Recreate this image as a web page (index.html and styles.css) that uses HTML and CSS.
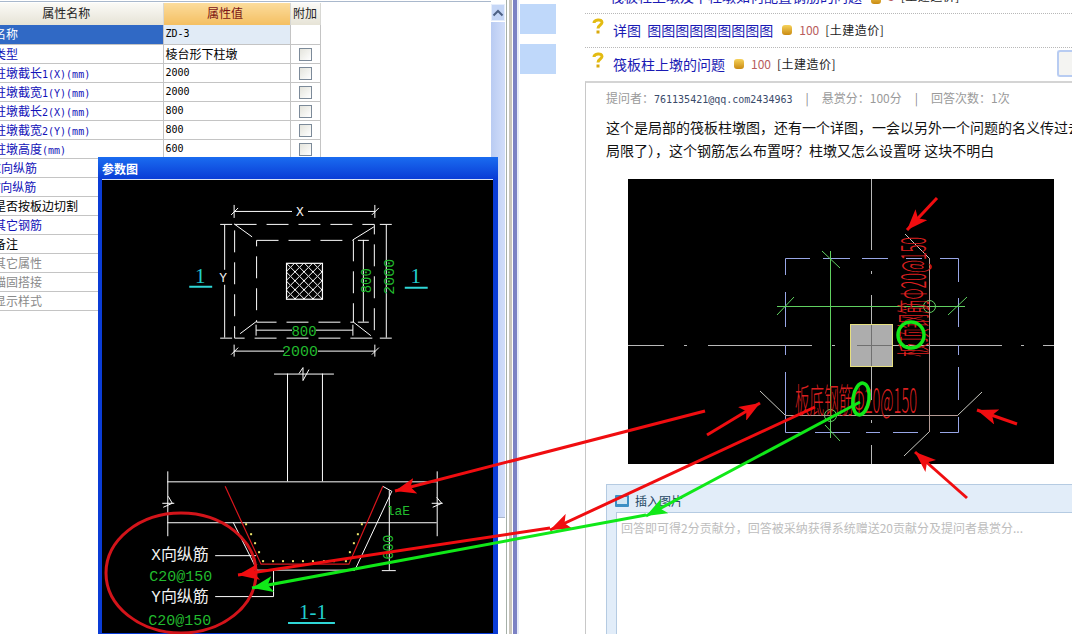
FILE: index.html
```html
<!DOCTYPE html>
<html lang="zh">
<head>
<meta charset="utf-8">
<title>筏板柱上墩的问题</title>
<link rel="stylesheet" href="styles.css">
</head>
<body>
<div class="screen">
  <section class="props">
    <div class="props-table-wrap">
      <table class="props-table">
        <colgroup><col class="c-name"><col class="c-val"><col class="c-add"></colgroup>
        <thead><tr><th class="th-name">属性名称</th><th class="th-val">属性值</th><th>附加</th></tr></thead>
        <tbody>
          <tr class="sel"><td class="name">名称</td><td class="val mono">ZD-3</td><td></td></tr>
          <tr><td class="name link">类型</td><td class="val">棱台形下柱墩</td><td><i class="chk"></i></td></tr>
          <tr><td class="name link">柱墩截长<span class="mono">1(X)(mm)</span></td><td class="val mono">2000</td><td><i class="chk"></i></td></tr>
          <tr><td class="name link">柱墩截宽<span class="mono">1(Y)(mm)</span></td><td class="val mono">2000</td><td><i class="chk"></i></td></tr>
          <tr><td class="name link">柱墩截长<span class="mono">2(X)(mm)</span></td><td class="val mono">800</td><td><i class="chk"></i></td></tr>
          <tr><td class="name link">柱墩截宽<span class="mono">2(Y)(mm)</span></td><td class="val mono">800</td><td><i class="chk"></i></td></tr>
          <tr><td class="name link">柱墩高度<span class="mono">(mm)</span></td><td class="val mono">600</td><td><i class="chk"></i></td></tr>
          <tr><td class="name link">X向纵筋</td><td></td><td></td></tr>
          <tr><td class="name link">Y向纵筋</td><td></td><td></td></tr>
          <tr><td class="name">是否按板边切割</td><td></td><td></td></tr>
          <tr><td class="name link">其它钢筋</td><td></td><td></td></tr>
          <tr><td class="name">备注</td><td></td><td></td></tr>
          <tr><td class="name dim">其它属性</td><td></td><td></td></tr>
          <tr><td class="name dim">锚固搭接</td><td></td><td></td></tr>
          <tr><td class="name dim">显示样式</td><td></td><td></td></tr>
        </tbody>
      </table>
    </div>
    <div class="vscroll">
      <div class="vscroll-btn"><svg width="12" height="8" viewBox="0 0 12 8"><path d="M1.500 6.500 6 2l4.500 4.500" fill="none" stroke="#4d6185" stroke-width="2"/></svg></div>
      <div class="vscroll-thumb"></div>
    </div>
  </section>
  <div class="splitter"></div>
  <main class="page">
    <nav class="side"><div class="side-block"></div><div class="side-block"></div></nav>
    <div class="content">
      <div class="q-row q-cut"><a class="q-title">筏板柱上墩及下柱墩如何配置钢筋的问题</a><span class="coin"></span><span class="q-pts">5</span><span class="q-tag">[土建造价]</span></div>
      <div class="q-row dotted">
        <svg class="q-mark" width="12" height="16" viewBox="0 0 12 16"><path d="M2 5C2 1.500 10 .5 10 4.500 10 7 6 7 6 10.500" fill="none" stroke="#e3bb12" stroke-width="3"/><rect x="4.500" y="12.500" width="3" height="3" fill="#d9a90c"/></svg>
        <a class="q-title">详图&nbsp;&nbsp;图图图图图图图图图</a><span class="coin"></span><span class="q-pts">100</span><span class="q-tag">[土建造价]</span>
      </div>
      <div class="q-row dotted">
        <svg class="q-mark" width="12" height="16" viewBox="0 0 12 16"><path d="M2 5C2 1.500 10 .5 10 4.500 10 7 6 7 6 10.500" fill="none" stroke="#e3bb12" stroke-width="3"/><rect x="4.500" y="12.500" width="3" height="3" fill="#d9a90c"/></svg>
        <a class="q-title">筏板柱上墩的问题</a><span class="coin"></span><span class="q-pts">100</span><span class="q-tag">[土建造价]</span>
        <span class="q-btn"></span>
      </div>
      <article class="q-box">
        <p class="q-meta">提问者：<span class="mono-user">761135421@qq.com2434963</span><span class="sep">|</span>悬赏分：100分<span class="sep">|</span>回答次数：1次</p>
        <p class="q-body">这个是局部的筏板柱墩图，还有一个详图，一会以另外一个问题的名义传过去（图片大小被<br>局限了），这个钢筋怎么布置呀？柱墩又怎么设置呀 这块不明白</p>
        <svg class="plan" width="426" height="285" viewBox="628 179 426 285">
          <rect x="628" y="179" width="426" height="285" fill="#000"/>
          <g stroke="#b9b9b9" stroke-width="1" fill="none">
            <path d="M871.500 179V250M871.500 271V274M871.500 295V324M871.500 367V400M871.500 420V423M871.500 445V464"/>
            <path d="M628 345.500H664M684 345.500H687M708 345.500H812M832 345.500H835M856 345.500H1002M1021 345.500H1024M1043 345.500H1054"/>
          </g>
          <path d="M785.500 275V258.500H810M823 258.500H850M862 258.500H888M906 258.500H922M940 258.500H958.500V282M958.500 298V327M958.500 345V355M958.500 367V400M958.500 417V432.500H940M918 432.500H893M880 432.500H866M850 432.500H815M805 432.500H785.500V372M785.500 355V345M785.500 327V292" fill="none" stroke="#98a6e6"/>
          <g stroke="#60d060" fill="none">
            <path d="M830.500 251V438M777 306.500H965"/>
            <path d="M822 251 840 268M777 315 794 297M948 315 967 297M825 425 840 441"/>
            <circle cx="929.500" cy="306.500" r="6"/>
            <circle cx="830.500" cy="415.500" r="6"/>
          </g>
          <g stroke="#b39a94" fill="none">
            <path d="M785 415.500H958M929.500 258V432"/>
            <path d="M905 234 929 258M760 391 785 415M958 415 982 392M929 432 904 456" stroke="#c8c8c0"/>
          </g>
          <rect x="850.500" y="324.500" width="42" height="42" fill="#adadad" stroke="#e6df80"/>
          <path d="M871.500 325V366M857 345.500H892" stroke="#707070"/>
          <text class="cad-red" x="795" y="413" font-size="34" textLength="122" lengthAdjust="spacingAndGlyphs">板底钢筋Φ20@150</text>
          <text class="cad-red" transform="translate(926 357) rotate(-90)" font-size="34" textLength="120" lengthAdjust="spacingAndGlyphs">板顶钢筋Φ20@150</text>
        </svg>
        <section class="reply">
          <div class="reply-bar">
            <svg width="14" height="12" viewBox="0 0 14 12"><rect width="14" height="12" rx="1" fill="#3c8fc4"/><rect x="2" y="2" width="10" height="7" fill="#cfe6f4"/></svg>
            <span>插入图片</span>
          </div>
          <div class="reply-input">回答即可得2分贡献分，回答被采纳获得系统赠送20贡献分及提问者悬赏分...</div>
        </section>
      </article>
    </div>
  </main>

  <section class="win">
    <header class="win-title">参数图</header>
    <svg class="win-canvas" width="391" height="454" viewBox="102 180 391 454">
      <defs>
        <pattern id="hatch" width="9" height="9" patternUnits="userSpaceOnUse" patternTransform="translate(286 263)">
          <path d="M0 0 9 9M9 0 0 9" stroke="#fff" stroke-width="1"/>
        </pattern>
      </defs>
      <g fill="none" stroke="#fff" stroke-width="1">
        <path d="M234 211.500H292M308 211.500H375M234 205V218M375 205V218M231 215 238 208M372 215 379 208"/>
        <rect x="234.500" y="224.500" width="140" height="114" stroke-dasharray="22 10"/>
        <rect x="256.500" y="240.500" width="97" height="82" stroke-dasharray="22 10"/>
        <rect x="286.500" y="263.500" width="36" height="36" fill="url(#hatch)" stroke-width="1.200"/>
        <path d="M234 224 252 237M374 227 353 240M240 334 256 322M353 322 371 336"/>
        <path d="M224.500 225V270M224.500 285V338M220 224.500H232M220 338.500H232"/>
        <path d="M386.500 225V338M380 224.500H392M380 338.500H392"/>
        <path d="M363.500 240V322M358 240.500H369M358 322.500H369"/>
        <path d="M256 330.500H292M316 330.500H353M256 325V336M353 325V336"/>
        <path d="M234 351.500H284M318 351.500H375M234 345V357M375 345V357M231 355 238 348M372 355 379 348"/>
        <path d="M274 374.500H334M287.500 374V482M322.500 374V482"/>
        <path d="M299 374 303 368 303 381 309 370"/>
        <path d="M167 482.500H437M167 523.500H437M167.500 472V537M437.500 472V537"/>
        <path d="M162 504H174M168 497 172 504 163 508M432 504H443M433 508 442 504 437 498"/>
        <path d="M233 523 257 571H355L392 492 383 487"/>
        <path d="M389.500 491V571M382 571.500H396"/>
        <path d="M215 556.500H256M215 597.500H273.500V571"/>
      </g>
      <path d="M225 487 261 565H349L383 487" fill="none" stroke="#d8161c" stroke-width="1.200"/>
      <g fill="#f2ea70">
        <rect x="245" y="524" width="2" height="2"/><rect x="250" y="534" width="2" height="2"/><rect x="254" y="543" width="2" height="2"/><rect x="258" y="552" width="2" height="2"/><rect x="262" y="561" width="2" height="2"/>
        <rect x="272" y="561" width="2" height="2"/><rect x="282" y="561" width="2" height="2"/><rect x="292" y="561" width="2" height="2"/><rect x="302" y="561" width="2" height="2"/><rect x="312" y="561" width="2" height="2"/><rect x="323" y="561" width="2" height="2"/><rect x="333" y="561" width="2" height="2"/><rect x="345" y="561" width="2" height="2"/>
        <rect x="349" y="552" width="2" height="2"/><rect x="353" y="543" width="2" height="2"/><rect x="357" y="534" width="2" height="2"/><rect x="361" y="524" width="2" height="2"/>
      </g>
      <g class="cad-green">
        <text x="300" y="356.500" text-anchor="middle" font-size="15">2000</text>
        <text x="304" y="336" text-anchor="middle" font-size="14">800</text>
        <text transform="translate(394 277) rotate(-90)" text-anchor="middle" font-size="15">2000</text>
        <text transform="translate(371 281) rotate(-90)" text-anchor="middle" font-size="14">800</text>
        <text transform="translate(393 548) rotate(-90)" text-anchor="middle" font-size="14">600</text>
        <text x="387" y="516" font-size="13">laE</text>
        <text x="149" y="582" font-size="15">C20@150</text>
        <text x="148" y="626" font-size="15">C20@150</text>
      </g>
      <g class="cad-white">
        <text x="300" y="216" text-anchor="middle" font-size="13">X</text>
        <text x="223" y="282" text-anchor="middle" font-size="13">Y</text>
        <text x="151" y="561" font-size="16">X向纵筋</text>
        <text x="151" y="603" font-size="16">Y向纵筋</text>
      </g>
      <g class="cad-cyan">
        <text x="200" y="283" text-anchor="middle" font-size="21">1</text>
        <text x="416" y="283" text-anchor="middle" font-size="21">1</text>
        <text x="313" y="620" text-anchor="middle" font-size="21">1-1</text>
      </g>
      <path d="M189 287H212M405 288H428M288 624H335" stroke="#2fd6d6" stroke-width="2" fill="none"/>
    </svg>
  </section>

  <svg class="marks" width="1072" height="634" viewBox="0 0 1072 634">
    <defs>
      <marker id="hr" markerUnits="userSpaceOnUse" markerWidth="22" markerHeight="16" refX="21" refY="8" orient="auto"><path d="M0 0 21 8 0 16 5 8z" fill="#f00d10"/></marker>
      <marker id="hg" markerUnits="userSpaceOnUse" markerWidth="22" markerHeight="16" refX="21" refY="8" orient="auto"><path d="M0 0 21 8 0 16 5 8z" fill="#10e818"/></marker>
    </defs>
    <ellipse cx="181" cy="573" rx="75" ry="60" fill="none" stroke="#d3141a" stroke-width="3"/>
    <g fill="none" stroke-width="3">
      <g stroke="#f00d10">
        <path d="M705 411 395 491" marker-end="url(#hr)"/>
        <path d="M707 435 760 403" marker-end="url(#hr)"/>
        <path d="M815 407 550 530" marker-end="url(#hr)"/>
        <path d="M550 528 238 575" marker-end="url(#hr)"/>
        <path d="M937 198 907 230" marker-end="url(#hr)"/>
        <path d="M1017 424 977 410" marker-end="url(#hr)"/>
        <path d="M967 498 915 452" marker-end="url(#hr)"/>
      </g>
      <g stroke="#10e818">
        <path d="M860 402 646 516" marker-end="url(#hg)"/>
        <path d="M646 515 252 588" marker-end="url(#hg)"/>
        <ellipse cx="861" cy="399" rx="8" ry="16" stroke-width="3.500" transform="rotate(8 861 399)"/>
        <circle cx="911" cy="335" r="13" stroke-width="3.500"/>
      </g>
    </g>
  </svg>
</div>
</body>
</html>
```
FILE: styles.css
```css
* { box-sizing: border-box; }
html, body { margin: 0; padding: 0; }
body { background: #fff; font-family: "Noto Sans CJK SC", "Liberation Sans", sans-serif; font-size: 12px; color: #000; }
.screen { position: relative; display: flex; width: 1072px; height: 634px; overflow: hidden; }

/* property pane */
.props { display: flex; flex: 0 0 505px; padding-top: 1px; }
.props-table-wrap { flex: 0 0 491px; overflow: hidden; border-top: 1px solid #a9b8cc; padding-top: 1px; }
.props-table { border-collapse: collapse; table-layout: fixed; width: 326px; margin-left: -6px; font-size: 12px; }
.c-name { width: 169px; }
.c-val { width: 127px; }
.c-add { width: 30px; }
.props-table th { height: 22px; padding: 0; font-weight: 400; color: #222; background: linear-gradient(#fbfaf6, #e6e3d6); border-right: 1px solid #d8d8d4; line-height: 19px; vertical-align: top; }
.props-table th.th-name { padding-right: 24px; }
.props-table th.th-val { background: linear-gradient(#fbdc9c, #f4bf62); color: #7b1414; padding-right: 3px; }
.props-table td { height: 19px; padding: 0 0 0 2px; border-bottom: 1px solid #c4c4c4; border-right: 1px solid #c4c4c4; line-height: 18px; white-space: nowrap; overflow: hidden; }
.props-table td.name { padding-left: 0; }
.props-table td:last-child { text-align: center; padding: 0; }
.sel .name { background: #3069c5; color: #fff; }
.sel .val { background: #e1ebf6; }
.link { color: #1212b8; }
.dim { color: #8a8a8a; }
.mono { font-family: "DejaVu Sans Mono", monospace; font-size: 10px; line-height: 10px; }
.chk { display: inline-block; width: 13px; height: 13px; margin-top: 3px; border: 1px solid #7c8a99; background: linear-gradient(135deg, #e4e4dc, #fff); vertical-align: top; }

.vscroll { flex: 0 0 14px; display: flex; flex-direction: column; padding-top: 3px; }
.vscroll-btn { height: 17px; display: flex; align-items: center; justify-content: center; background: #c5d6f6; border: 1px solid #e6eefc; }
.vscroll-thumb { height: 496px; margin-top: 1px; background: linear-gradient(90deg, #b9cbf2, #d2defa); border-bottom: 1px solid #a9b6cc; }

.splitter { flex: 0 0 14px; background: linear-gradient(90deg, #fff 0 1px, #a6b0a8 1px 2px, #fff 2px 4px, #c9c6bc 4px 7px, #fff 7px 8px, #7c82c4 8px 12px, #e7ecf9 12px 14px); }

/* page */
.page { flex: 1; display: flex; min-width: 0; }
.side { flex: 0 0 66px; padding: 4px 0 0 1px; display: flex; flex-direction: column; gap: 10px; }
.side-block { width: 36px; height: 30px; background: #bfd8fa; }
.content { flex: 1; min-width: 0; display: flex; flex-direction: column; height: 634px; }
.q-row { display: flex; align-items: center; flex: none; height: 34px; padding: 0 0 2px 7px; white-space: nowrap; font-size: 12px; line-height: 20px; }
.q-cut { height: 13px; overflow: hidden; align-items: flex-start; padding: 0 0 0 25px; }
.q-cut > * { margin-top: -14px; }
.q-cut .coin { margin-top: -6px; }
.dotted { border-top: 1px dotted #b8b8b8; }
.q-mark { flex: none; margin: -7px 9px 0 0; }
.q-title { font-size: 14px; color: #1a1ab4; }
.coin { flex: none; width: 10px; height: 10px; margin: 0 7px 0 9px; border-radius: 3px; background: linear-gradient(#f6d25a, #c98a12); }
.q-pts { color: #b85c5c; font-size: 12px; margin-right: 6px; }
.q-tag { color: #222; font-size: 12px; letter-spacing: .5px; }
.q-btn { flex: none; margin-left: auto; width: 15px; height: 27px; border: 2px solid #b8ccf2; border-right: 0; border-radius: 3px 0 0 3px; background: #f4f4f2; }

.q-box { flex: 1; border-top: 2px solid #d4d4d4; border-left: 1px solid #c8c8c8; padding: 6px 0 0 20px; display: flex; flex-direction: column; min-height: 0; }
.q-meta { margin: 0; height: 18px; line-height: 18px; color: #9a9a9a; white-space: nowrap; font-size: 12px; }
.mono-user { font-family: "DejaVu Sans Mono", monospace; font-size: 10px; color: #3a4a6a; }
.sep { margin: 0 13px; color: #888; }
.q-body { margin: 9px 0 0; font-size: 14px; line-height: 23px; white-space: nowrap; color: #111; height: 46px; flex: none; }
.plan { display: block; flex: none; margin: 17px 0 0 22px; }
.cad-red { fill: #d81f1f; font-family: "Noto Sans CJK SC", sans-serif; font-weight: 300; }

.reply { flex: 1; margin-top: 20px; background: #e2edf9; border: 1px solid #b5cbe2; border-right: 0; border-bottom: 0; padding-left: 9px; display: flex; flex-direction: column; min-height: 0; }
.reply-bar { height: 27px; flex: none; display: flex; align-items: center; gap: 6px; color: #274a66; font-size: 12px; padding: 4px 0 0 0; margin-left: -1px; }
.reply-input { flex: 1; background: #fff; border: 1px solid #b5cbe2; border-right: 0; border-bottom: 0; padding: 6px 0 0 4px; line-height: 18px; color: #bdbdbd; font-size: 12px; white-space: nowrap; }

/* floating window */
.win { position: absolute; left: 98px; top: 157px; width: 400px; height: 480px; background: linear-gradient(#1a6cf0, #0a3cd6 22px); padding: 0 4px; }
.win-title { height: 22px; line-height: 24px; color: #fff; font-weight: 700; font-size: 12px; }
.win-canvas { display: block; background: #000; border-top: 1px solid #d8e2f6; }
.win-canvas text { font-family: "Liberation Mono", "Noto Sans CJK SC", monospace; }
.win-canvas .cad-cyan text { font-family: "Liberation Serif", serif; }
.cad-green { fill: #22bb2e; }
.cad-white { fill: #f2f2f2; }
.cad-cyan { fill: #22cfcf; }

/* annotation overlay */
.marks { position: absolute; left: 0; top: 0; pointer-events: none; }
```
